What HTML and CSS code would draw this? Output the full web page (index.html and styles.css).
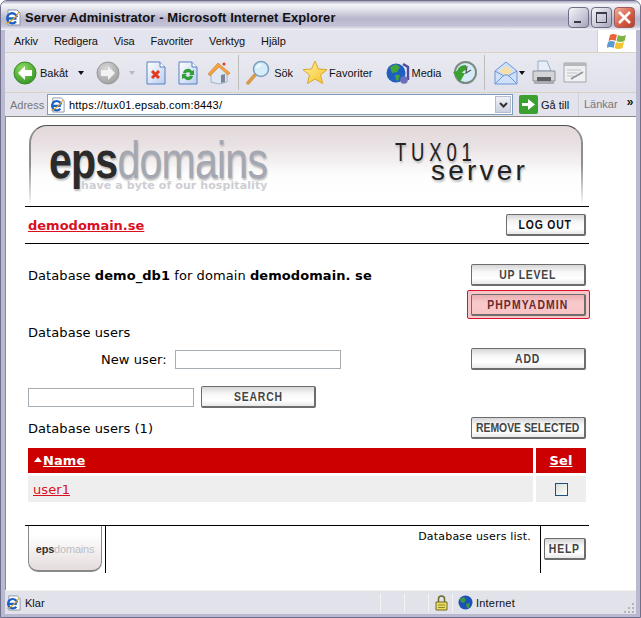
FILE: index.html
```html
<!DOCTYPE html>
<html>
    <head>
        <title>Server Administrator</title>
        <link rel="stylesheet" href="styles.css">
    </head>
    <body>
        <svg class="defs" width="0" height="0">
            <defs>
                <radialGradient id="green-ball" cx=".4" cy=".3" r=".8"><stop offset="0" stop-color="#8fdc62"/><stop offset="1" stop-color="#2c8f1f"/></radialGradient>
                <radialGradient id="grey-ball" cx=".4" cy=".3" r=".8"><stop offset="0" stop-color="#d8d8d8"/><stop offset="1" stop-color="#9a9a9a"/></radialGradient>
                <linearGradient id="doc" x1="0" y1="0" x2="1" y2="1"><stop offset="0" stop-color="#fff"/><stop offset="1" stop-color="#b9cdf0"/></linearGradient>
                <linearGradient id="star" x1="0" y1="0" x2="1" y2="1"><stop offset="0" stop-color="#fff3a6"/><stop offset="1" stop-color="#f5bf22"/></linearGradient>
                <symbol id="ie-page" viewBox="0 0 17 17">
                    <path d="M3 1h9l3 3v12H3z" fill="#fff" stroke="#8a93a5"/>
                    <path d="M3 9.500h8.500M12 8a5 5 0 1 0-1 4.500" fill="none" stroke="#1d5fc4" stroke-width="2.300"/>
                    <path d="M1 14C5 14 12 7 14 3" fill="none" stroke="#e2a32a" stroke-width="1.100"/>
                </symbol>
            </defs>
        </svg>

        <div class="window">
            <div class="titlebar">
                <svg class="title-icon" width="17" height="17"><use href="#ie-page"/></svg>
                <span class="title-text">Server Administrator - Microsoft Internet Explorer</span>
                <div class="win-buttons">
                    <div class="win-btn"><i class="min-glyph"></i></div>
                    <div class="win-btn"><i class="max-glyph"></i></div>
                    <div class="win-btn close">
                        <svg width="15" height="15" viewBox="0 0 15 15"><path d="M2 2l11 11M13 2L2 13" stroke="#fff" stroke-width="2.600"/></svg>
                    </div>
                </div>
            </div>

            <div class="chrome">
                <div class="menubar">
                    <div class="menu-items">
                        <span>Arkiv</span><span>Redigera</span><span>Visa</span><span>Favoriter</span><span>Verktyg</span><span>Hjälp</span>
                    </div>
                    <div class="flag-box">
                        <svg width="21" height="19" viewBox="0 0 21 19"><path d="M3 3q3-2 7 0l-1.500 6q-3-2-7 0z" fill="#e8643c"/><path d="M11 3q4 2 8 0l-1.500 6q-4 2-8 0z" fill="#7cb342"/><path d="M1 10q3-2 7 0l-1.500 6q-3-2-7 0z" fill="#5b9bd5"/><path d="M9 10q4 2 8 0l-1.500 6q-4 2-8 0z" fill="#f2c230"/></svg>
                    </div>
                </div>

                <div class="toolbar">
                    <div class="tool back">
                        <svg width="24" height="24" viewBox="0 0 24 24"><circle cx="12" cy="12" r="11" fill="url(#green-ball)" stroke="#3a8a2a"/><path d="M5 12l7-7v4h7v6h-7v4z" fill="#fff"/></svg>
                        <span>Bakåt</span><i class="drop"></i>
                    </div>
                    <div class="tool forward">
                        <svg width="24" height="24" viewBox="0 0 24 24"><circle cx="12" cy="12" r="11" fill="url(#grey-ball)" stroke="#989898"/><path d="M19 12l-7-7v4H5v6h7v4z" fill="#f2f2f2"/></svg>
                        <i class="drop faded"></i>
                    </div>
                    <div class="tool stop">
                        <svg width="22" height="24" viewBox="0 0 22 24"><path d="M2 1h13l5 5v17H2z" fill="url(#doc)" stroke="#5a7fc0"/><path d="M15 1v5h5" fill="#fff" stroke="#5a7fc0"/><path d="M7 10l7 7M14 10l-7 7" stroke="#e23a1c" stroke-width="3"/></svg>
                    </div>
                    <div class="tool refresh">
                        <svg width="22" height="24" viewBox="0 0 22 24"><path d="M2 1h13l5 5v17H2z" fill="url(#doc)" stroke="#5a7fc0"/><path d="M15 1v5h5" fill="#fff" stroke="#5a7fc0"/><path d="M6 12a5 5 0 0 1 9-2l2-1v5h-5l1.500-1.500a3 3 0 0 0-5 0zM16 15a5 5 0 0 1-9 2l-2 1v-5h5l-1.500 1.500a3 3 0 0 0 5 0z" fill="#2e9e35"/></svg>
                    </div>
                    <div class="tool home">
                        <svg width="24" height="24" viewBox="0 0 24 24"><path d="M4 11l8-6 8 6v10l-8 2-8-2z" fill="#dfe9f6" stroke="#8a9bb5" stroke-width=".7"/><path d="M1 13L11 2l12 10-2 2-9-8-9 9z" fill="#f2a443" stroke="#cf7b28" stroke-width=".6"/><path d="M14 14l4-1v8l-4 1z" fill="#7d8794"/><circle cx="17" cy="3" r="1.500" fill="#d63b2a"/></svg>
                    </div>
                    <i class="sep"></i>
                    <div class="tool search">
                        <svg width="25" height="25" viewBox="0 0 25 25"><path d="M9 15L2 23" stroke="#d99a4a" stroke-width="3.500" stroke-linecap="round"/><circle cx="15" cy="9" r="7.500" fill="#d5ecfb" stroke="#7e9fc0" stroke-width="1.600"/><path d="M11 8a4 4 0 0 1 4-3" fill="none" stroke="#fff" stroke-width="1.500"/></svg>
                        <span>Sök</span>
                    </div>
                    <div class="tool favs">
                        <svg width="26" height="25" viewBox="0 0 26 25"><path d="M13 1l3.500 8 8.500.6-6.500 5.400 2.200 8.500L13 19l-7.700 4.500L7.500 15 1 9.600 9.500 9z" fill="url(#star)" stroke="#d9a82a"/></svg>
                        <span>Favoriter</span>
                    </div>
                    <div class="tool media">
                        <svg width="24" height="24" viewBox="0 0 24 24"><circle cx="10" cy="12" r="9.500" fill="#1f5fc0"/><path d="M4 6l6-3 4 3-3 5-5 1zM9 14l5 0-2 6-2-1z" fill="#43a33c"/><path d="M17 3l5 3v13" fill="none" stroke="#4e4c9c" stroke-width="2.400"/><circle cx="18" cy="19" r="3.800" fill="#6f6dbc"/></svg>
                        <span>Media</span>
                    </div>
                    <div class="tool history">
                        <svg width="25" height="25" viewBox="0 0 25 25"><circle cx="13.500" cy="12.500" r="10.500" fill="#d5ecf8" stroke="#7c8a80" stroke-width="2"/><path d="M15 6l-1 7 5-3" fill="none" stroke="#555" stroke-width="1.200"/><path d="M1 12l4-1a9 9 0 0 1 9-6v5a5 5 0 0 0-4 3l3 0-5 9-7-10z" fill="#39a12f"/></svg>
                    </div>
                    <i class="sep sep-last"></i>
                    <div class="tool mail">
                        <svg width="24" height="24" viewBox="0 0 24 24"><path d="M1 10L12 1l11 9v13H1z" fill="#cfe0fa" stroke="#6c95d4"/><path d="M5 10l7-5 7 5-7 5z" fill="#f6dfa8"/><path d="M1 23l9-9h4l9 9M1 10l9 5M23 10l-9 5" fill="none" stroke="#6c95d4"/></svg>
                        <i class="drop"></i>
                    </div>
                    <div class="tool print">
                        <svg width="24" height="25" viewBox="0 0 24 25"><path d="M6 1h9l4 10H6z" fill="#e6eefa" stroke="#9aa9bd"/><path d="M1 11h22v10H1z" fill="#d2d4d6" stroke="#8b8f94"/><path d="M5 17h14v4H5z" fill="#5c5f63"/><path d="M2 21h20v3H2z" fill="#a9adb1"/></svg>
                    </div>
                    <div class="tool edit">
                        <svg width="24" height="21" viewBox="0 0 24 21"><path d="M1 1h22v19H1z" fill="#eef0f2" stroke="#a3a7ab"/><path d="M1 1h22v3H1z" fill="#b5b8bb"/><path d="M4 8h14M4 11h10M4 14h7" stroke="#c0c3c6"/><path d="M8 17l12-7" stroke="#8f9398" stroke-width="1.600"/></svg>
                    </div>
                </div>

                <div class="addressbar">
                    <span class="adr-label">Adress</span>
                    <div class="adr-field">
                        <svg width="16" height="16"><use href="#ie-page"/></svg>
                        <span class="adr-url">https://tux01.epsab.com:8443/</span>
                        <div class="adr-drop"><svg width="9" height="6" viewBox="0 0 9 6"><path d="M1 1l3.500 3.500L8 1" fill="none" stroke="#333" stroke-width="2"/></svg></div>
                    </div>
                    <div class="go">
                        <svg width="19" height="19" viewBox="0 0 19 19"><rect width="19" height="19" rx="2" fill="#3aa12e"/><path d="M3 8h6V4l7 5.500L9 15v-4H3z" fill="#fff"/></svg>
                        <span>Gå till</span>
                    </div>
                    <span class="links">Länkar</span>
                    <span class="more">»</span>
                </div>
            </div>

            <div class="page">
                <div class="banner">
                    <div class="logo">
                        <div class="logo-main"><b>eps</b>domains</div>
                        <div class="logo-tag">have a byte of our hospitality</div>
                    </div>
                    <div class="server-name">
                        <div class="server-line1">TUX01</div>
                        <div class="server-line2">server</div>
                    </div>
                </div>

                <div class="domain-row">
                    <a class="domain-link" href="#">demodomain.se</a>
                    <button class="btn logout"><span>LOG OUT</span></button>
                </div>

                <div class="db-row">
                    <p class="db-line">Database <b>demo_db1</b> for domain <b>demodomain. se</b></p>
                    <div class="db-actions">
                        <button class="btn wide"><span>UP LEVEL</span></button>
                        <div class="highlight"><button class="btn wide pink"><span>PHPMYADMIN</span></button></div>
                    </div>
                </div>

                <p class="section-label">Database users</p>

                <div class="new-user-row">
                    <label class="new-user-label">New user:</label>
                    <input class="text-input new-user-input" type="text">
                    <button class="btn wide add"><span>ADD</span></button>
                </div>

                <div class="search-row">
                    <input class="text-input" type="text">
                    <button class="btn wide"><span>SEARCH</span></button>
                </div>

                <div class="list-head">
                    <span>Database users (1)</span>
                    <button class="btn wide remove"><span>REMOVE SELECTED</span></button>
                </div>

                <table class="users">
                    <tr>
                        <th class="name-col"><i class="sort-arrow"></i><a href="#">Name</a></th>
                        <th class="sel-col"><a href="#">Sel</a></th>
                    </tr>
                    <tr>
                        <td class="name-col"><a href="#">user1</a></td>
                        <td class="sel-col"><i class="check"></i></td>
                    </tr>
                </table>

                <div class="help-bar">
                    <div class="mini-logo"><b>eps</b>domains</div>
                    <div class="help-text">Database users list.</div>
                    <div class="help-side"><button class="btn help"><span>HELP</span></button></div>
                </div>
            </div>

            <div class="statusbar">
                <svg width="16" height="16"><use href="#ie-page"/></svg>
                <span class="status-text">Klar</span>
                <i class="status-cell"></i><i class="status-cell"></i><i class="status-cell"></i>
                <svg class="lock" width="13" height="16" viewBox="0 0 13 16"><path d="M3.500 7V4a3 3 0 0 1 6 0v3" fill="none" stroke="#6b6b2a" stroke-width="1.500"/><path d="M1 7h11v8H1z" fill="#efdc5e" stroke="#6b6b2a"/><path d="M3 10h7M3 12.500h7" stroke="#8a8a30"/></svg>
                <i class="status-cell lock-cell"></i>
                <svg width="15" height="15" viewBox="0 0 15 15"><circle cx="7.500" cy="7.500" r="7" fill="#1f4fb8"/><path d="M2 4l4-2 2 3-2 3-3-1zM8 9l4-1-1 5-2 0z" fill="#3c9c3a"/></svg>
                <span class="zone">Internet</span>
                <svg class="grip" width="11" height="11" viewBox="0 0 11 11"><path d="M8 1h2v2H8zM4 5h2v2H4zM8 5h2v2H8zM0 9h2v2H0zM4 9h2v2H4zM8 9h2v2H8z" fill="#b5b5bd"/></svg>
            </div>
        </div>
    </body>
</html>
```

FILE: styles.css
```css
html, body {
    margin: 0;
    padding: 0;
}

body {
    width: 641px;
    height: 618px;
    overflow: hidden;
    background: #fff;
    font-family: "DejaVu Sans", sans-serif;
}

i {
    display: block;
}

p {
    margin: 0;
}

.defs {
    position: absolute;
}

.window {
    width: 641px;
    height: 618px;
    box-sizing: border-box;
    display: flex;
    flex-direction: column;
    background: #b9b9cf;
    border-radius: 7px 7px 0 0;
    border: 1px solid #6f6f8c;
}

/* title bar */
.titlebar {
    height: 29px;
    flex: none;
    box-sizing: border-box;
    display: flex;
    align-items: center;
    padding: 3px 5px 0 4px;
    background: linear-gradient(#a9a8c2 0%, #f4f4f8 12%, #e6e6ee 26%, #b7b6cc 62%, #c4c3d6 86%, #f4f4f8 100%);
    border-radius: 6px 6px 0 0;
}

.title-icon {
    margin-right: 3px;
}

.title-text {
    flex: 1;
    font: bold 13px "Liberation Sans", sans-serif;
    letter-spacing: .08px;
    color: #111;
}

.win-buttons {
    display: flex;
    gap: 2px;
}

.win-btn {
    width: 21px;
    height: 21px;
    box-sizing: border-box;
    border: 1px solid #6d6d86;
    border-radius: 4px;
    background: linear-gradient(135deg, #f4f4f8, #c6c6d6 60%, #a3a3bb);
    display: flex;
    align-items: center;
    justify-content: center;
}

.win-btn.close {
    background: linear-gradient(135deg, #efb1a0, #d5583f 60%, #b73e2c);
    border-color: #9e5d5d;
}

.min-glyph {
    width: 7px;
    height: 2px;
    margin: 10px 3px 0 0;
    background: #3a3a4c;
}

.max-glyph {
    width: 9px;
    height: 8px;
    border: 1px solid #3a3a4c;
    border-top-width: 2px;
}

/* browser chrome */
.chrome {
    flex: none;
    margin: 0 4px;
    background: #e3e3ed;
    font: 11px "Liberation Sans", sans-serif;
    color: #111;
}

.menubar {
    height: 22px;
    display: flex;
    justify-content: space-between;
    border-bottom: 1px solid #d8d3c0;
    background: #e3e4ed;
}

.menu-items {
    display: flex;
    gap: 16px;
    align-items: center;
    padding-left: 9px;
    letter-spacing: -.1px;
}

.flag-box {
    width: 38px;
    background: #fff;
    border-left: 1px solid #d8d3c0;
    display: flex;
    align-items: center;
    justify-content: center;
}

.toolbar {
    height: 39px;
    display: flex;
    align-items: center;
    padding-left: 8px;
    border-bottom: 1px solid #d8d3c0;
    background: linear-gradient(#e9e9f1, #e0e1eb);
}

.tool {
    display: flex;
    align-items: center;
    gap: 3px;
}

.back span {
    margin-right: 7px;
}

.forward {
    margin-left: 12px;
    gap: 9px;
}

.stop {
    margin-left: 10px;
}

.refresh {
    margin-left: 10px;
}

.home {
    margin-left: 8px;
}

.favs {
    margin-left: 9px;
    gap: 1px;
}

.media {
    margin-left: 13px;
    gap: 2px;
}

.history {
    margin-left: 11px;
}

.mail {
    gap: 1px;
}

.print {
    margin-left: 7px;
}

.edit {
    margin-left: 7px;
}

.drop {
    width: 0;
    height: 0;
    border: 3px solid transparent;
    border-top: 4px solid #111;
    border-bottom: 0;
}

.drop.faded {
    border-top-color: #b8b8c0;
}

.sep {
    width: 1px;
    height: 35px;
    margin: 0 7px;
    background: #bdbdb8;
}

.sep-last {
    margin: 0 9px 0 7px;
}

.addressbar {
    height: 23px;
    display: flex;
    align-items: center;
    background: #e3e3ed;
}

.adr-label {
    width: 39px;
    padding-left: 5px;
    box-sizing: border-box;
    margin-right: 3px;
    color: #777;
}

.adr-field {
    width: 466px;
    height: 21px;
    box-sizing: border-box;
    display: flex;
    align-items: center;
    gap: 3px;
    padding-left: 2px;
    background: #fff;
    border: 1px solid #7f9db9;
}

.adr-url {
    flex: 1;
    color: #000;
    letter-spacing: .2px;
}

.adr-drop {
    width: 16px;
    height: 17px;
    margin-right: 1px;
    display: flex;
    align-items: center;
    justify-content: center;
    background: linear-gradient(#f0f1f6, #cdd2e2);
    border: 1px solid #b4bccf;
    box-sizing: border-box;
}

.go {
    display: flex;
    align-items: center;
    gap: 3px;
    margin-left: 6px;
    width: 59px;
}

.links {
    padding-left: 5px;
    border-left: 1px solid #cfcfd8;
    line-height: 23px;
    color: #777;
}

.more {
    margin-left: 9px;
    margin-top: -6px;
    font-weight: bold;
    font-size: 12px;
}

/* page content */
.page {
    flex: none;
    width: 631px;
    height: 474px;
    margin: 0 4px;
    padding: 8px 46px 0 19px;
    background: #fff;
    border-top: 1px solid #8b8a80;
    border-left: 1px solid #8b8a80;
    box-sizing: border-box;
    font-size: 13px;
    letter-spacing: .07px;
    color: #000;
}

.page a {
    color: #d8101f;
}

.banner {
    width: 554px;
    height: 81px;
    margin-left: 4px;
    box-sizing: border-box;
    position: relative;
    border: 2px solid #8e8e8e;
    border-bottom: 0;
    border-top: 1px solid #4f4f4f;
    border-radius: 18px 18px 0 0;
    background: linear-gradient(#e3d9db 0%, #e8e0e2 22%, #fdfcfc 62%, #fff 100%);
    display: flex;
    justify-content: space-between;
}

/* fades the sides of the banner into the page */
.banner::after {
    content: "";
    position: absolute;
    left: -2px;
    right: -2px;
    bottom: 0;
    height: 42px;
    background: linear-gradient(rgba(255, 255, 255, 0), #fff);
}

.logo, .server-name {
    position: relative;
    z-index: 1;
}

.logo {
    padding: 8px 0 0 18px;
    line-height: 1;
}

.logo-main {
    font: 52px/52px "Liberation Sans", sans-serif;
    letter-spacing: -1px;
    color: #a4a8b2;
    text-shadow: 1px 2px 2px #bbb;
    transform: scaleX(.79);
    transform-origin: left;
    white-space: nowrap;
}

.logo-main b {
    color: #2b2b2b;
}

.logo-tag {
    margin-top: -6px;
    margin-left: 32px;
    font: bold 11px/11px "DejaVu Sans", sans-serif;
    letter-spacing: .1px;
    color: #cdced3;
    white-space: nowrap;
}

.server-name {
    padding: 14px 53px 0 0;
    color: #222;
    text-shadow: 1px 2px 2px #bbb;
    font-family: "Liberation Sans", sans-serif;
}

.server-line1 {
    font-size: 25px;
    line-height: 24px;
    letter-spacing: 6.500px;
    margin-left: -36px;
    transform: scaleX(.74);
    transform-origin: left;
}

.server-line2 {
    font-size: 28px;
    line-height: 22px;
    margin-top: -4px;
    letter-spacing: 3.200px;
}

.domain-row {
    width: 564px;
    height: 38px;
    display: flex;
    align-items: center;
    justify-content: space-between;
    border-top: 1px solid #000;
    border-bottom: 1px solid #000;
    padding: 0 3px;
    box-sizing: border-box;
}

.domain-link {
    font-weight: bold;
    letter-spacing: 0;
}

.btn {
    box-sizing: border-box;
    height: 22px;
    padding: 0;
    border: 1px solid #6d6d6d;
    border-right-width: 2px;
    border-bottom-width: 2px;
    border-radius: 2px;
    background: linear-gradient(#d6d6d8 0%, #f6f6f7 35%, #fff 70%, #e9e9ea 100%);
    font: bold 13px "Liberation Sans", sans-serif;
    letter-spacing: 1px;
    color: #444;
}

.btn span {
    display: inline-block;
    margin: 0 -20px;
    white-space: nowrap;
    transform: scaleX(.8);
}

.logout {
    width: 80px;
    color: #111;
}

.wide {
    width: 115px;
}

.db-row {
    margin-top: 20px;
    width: 561px;
    display: flex;
    justify-content: space-between;
    padding-left: 3px;
    box-sizing: border-box;
}

.db-line {
    padding-top: 4px;
}

.db-actions {
    display: flex;
    flex-direction: column;
    align-items: flex-end;
}

.highlight {
    margin: 4px -4px 0 0;
    padding: 3px 3px 2px;
    background: #f7c6c8;
    border: 1px solid #d9142a;
    border-radius: 2px;
}

.pink {
    display: block;
    background: linear-gradient(#eaaeb1, #f8c9cb 40%, #f7c4c6);
    color: #6a2a30;
    letter-spacing: 1.400px;
}

.section-label {
    margin: 6px 0 0 3px;
    line-height: 16px;
}

.new-user-row {
    width: 561px;
    display: flex;
    align-items: center;
    margin-top: 7px;
}

.new-user-label {
    margin-left: 76px;
    margin-right: 8px;
}

.text-input {
    width: 166px;
    height: 19px;
    box-sizing: border-box;
    padding: 0;
    border: 1px solid #a5acb2;
    background: #fff;
}

.add {
    margin-left: auto;
}

.search-row {
    display: flex;
    align-items: center;
    gap: 7px;
    margin: 16px 0 0 3px;
}

.list-head {
    width: 561px;
    display: flex;
    align-items: center;
    justify-content: space-between;
    margin-top: 9px;
    padding-left: 3px;
    box-sizing: border-box;
}

.remove {
    letter-spacing: 0;
}

.users {
    margin: 6px 0 0 3px;
    width: 558px;
    border-collapse: separate;
    border-spacing: 0 3px;
    table-layout: fixed;
}

.users th {
    height: 25px;
    padding: 0;
    background: #cc0000;
    text-align: left;
    font-weight: bold;
}

.users td {
    height: 26px;
    padding: 0;
    background: #eeeeee;
}

.users th a {
    color: #fff;
}

.name-col {
    padding-left: 5px !important;
    border-right: 3px solid #fff;
    box-sizing: border-box;
}

.users th.name-col {
    padding-left: 6px !important;
}

.sel-col {
    width: 50px;
    text-align: center !important;
}

.sort-arrow {
    display: inline-block;
    width: 0;
    height: 0;
    margin-right: 1px;
    border: 4px solid transparent;
    border-bottom: 5px solid #fff;
    border-top: 0;
    vertical-align: 3px;
}

.check {
    width: 11px;
    height: 11px;
    margin: 0 auto;
    border: 1px solid #1c5180;
    background: linear-gradient(135deg, #dcdcd7, #fff);
}

.help-bar {
    width: 564px;
    height: 48px;
    margin-top: 20px;
    border-top: 1px solid #000;
    display: flex;
    box-sizing: border-box;
}

.mini-logo {
    width: 74px;
    height: 46px;
    margin-left: 3px;
    box-sizing: border-box;
    border: 1px solid #888;
    border-top: 0;
    border-bottom-width: 2px;
    border-radius: 0 0 10px 10px;
    background: linear-gradient(#fff 20%, #e6dcdc);
    font: 11px/46px "Liberation Sans", sans-serif;
    letter-spacing: -.2px;
    text-align: center;
    color: #bcbec4;
}

.mini-logo b {
    color: #333;
}

.help-text {
    flex: 1;
    border-left: 1px solid #000;
    margin-left: 3px;
    padding: 4px 9px 0 0;
    text-align: right;
    font-size: 11px;
    letter-spacing: .2px;
}

.help-side {
    width: 49px;
    box-sizing: border-box;
    border-left: 1px solid #000;
    padding: 12px 0 0 3px;
}

.help {
    width: 42px;
}

/* status bar */
.statusbar {
    flex: 1;
    margin: 0 4px 3px;
    display: flex;
    align-items: center;
    padding-left: 1px;
    background: #e1e2ea;
    border-top: 1px solid #f4f3ea;
    font: 11px "Liberation Sans", sans-serif;
    color: #111;
}

.status-text {
    margin-left: 3px;
    width: 355px;
}

.status-cell {
    width: 1px;
    height: 18px;
    margin-right: 23px;
    background: #f4f4f4;
}

.lock {
    margin-left: -17px;
}

.lock-cell {
    margin: 0 5px 0 4px;
}

.zone {
    margin-left: 3px;
    letter-spacing: .2px;
}

.grip {
    margin: 9px 1px 0 auto;
}
```
